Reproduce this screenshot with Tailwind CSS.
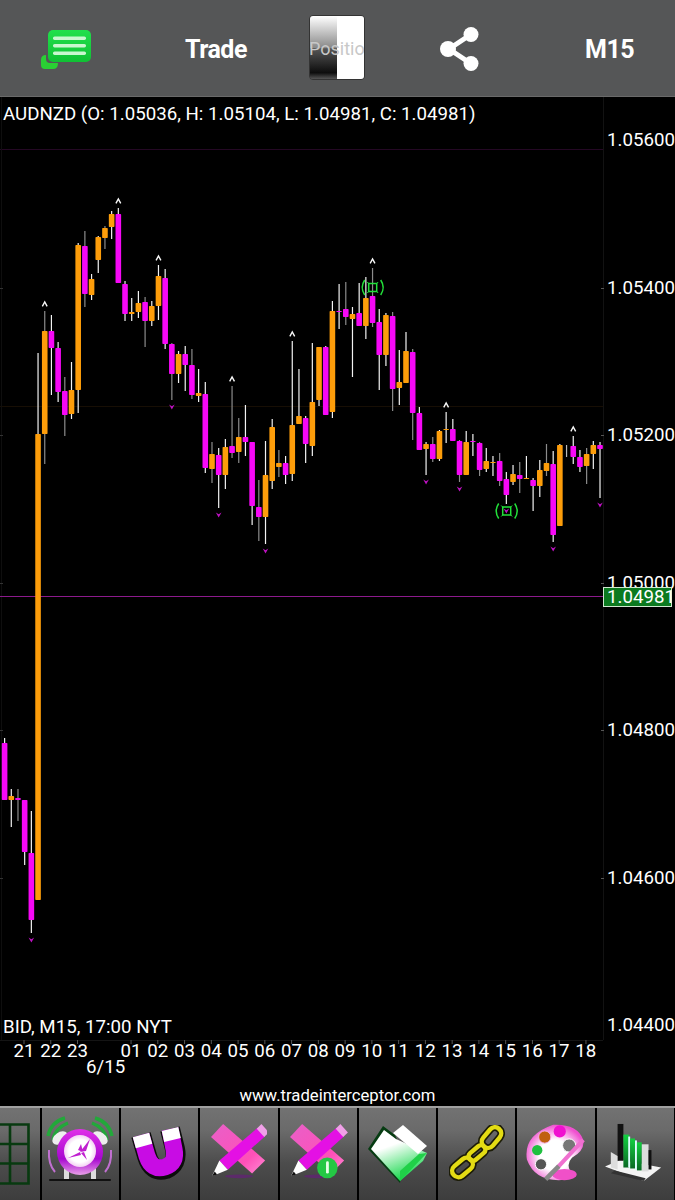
<!doctype html>
<html>
<head>
<meta charset="utf-8">
<script src="https://cdn.jsdelivr.net/npm/@tailwindcss/browser@4"></script>
</head>
<body class="bg-black">
<div class="w-[675px] h-[1200px] flex flex-col overflow-hidden bg-black text-white font-['Roboto',sans-serif]">

  <!-- Header -->
  <header class="h-[97px] shrink-0 bg-[#555657] border-b border-[#6a6a6a] flex items-center relative">
    <div class="w-[100px] flex pl-[40px]">
      <svg width="60" height="50" viewBox="0 0 60 50" class="mt-[2px] shrink-0">
        <defs><linearGradient id="chatg" x1="0" y1="0" x2="0" y2="1"><stop offset="0" stop-color="#22e04c"/><stop offset="1" stop-color="#10c034"/></linearGradient></defs>
        <path d="M6 31 q-5 0 -5 5 v5 q0 4 4 4 h8 q5 0 5 -6 h-8 q-4 0 -4 -4 z" fill="#2ad034"/>
        <rect x="8" y="6" width="43" height="32" rx="5" fill="url(#chatg)"/>
        <rect x="13" y="12.5" width="33" height="3.4" rx="1.6" fill="#c9f7cf"/>
        <rect x="13" y="20" width="33" height="3.4" rx="1.6" fill="#c9f7cf"/>
        <rect x="13" y="27.5" width="33" height="3.4" rx="1.6" fill="#c9f7cf"/>
      </svg>
    </div>
    <div class="ml-[84px] w-[64px] text-center text-[25px] font-bold tracking-[-0.5px] leading-none mt-[3px]">Trade</div>
    <div class="ml-[61px] w-[56px] h-[65px] rounded-[4px] border border-[#333] overflow-hidden relative flex -mt-[1px]">
      <div class="w-1/2 h-full bg-[linear-gradient(to_bottom,#ffffff_0%,#8a8a8a_50%,#555_52%,#0d0d0d_90%,#555_100%)]"></div>
      <div class="w-1/2 h-full bg-white"></div>
      <div class="absolute inset-0 flex items-center whitespace-nowrap text-[18px] text-[#c8c8c8] leading-none -ml-[1px] mt-[3px]">Positio</div>
    </div>
    <div class="ml-[74px] w-[42px] flex">
      <svg width="42" height="48" viewBox="0 0 42 48" class="mt-[2px]">
        <path d="M31 10 L10 24 L31 38" fill="none" stroke="#fff" stroke-width="5"/>
        <circle cx="32" cy="9.5" r="7.5" fill="#fff"/><circle cx="9" cy="24" r="8" fill="#fff"/><circle cx="32" cy="38.5" r="7.5" fill="#fff"/>
      </svg>
    </div>
    <div class="ml-[104px] text-[25px] font-bold tracking-[-0.5px] leading-none mt-[3px]">M15</div>
  </header>

  <!-- Chart -->
  <main class="relative h-[1009px] shrink-0 bg-black">
    <svg id="chart" width="675" height="1009" viewBox="0 97 675 1009" class="absolute inset-0"></svg>

    <div class="absolute left-[3px] top-[5px] text-[18.7px] leading-[24px] whitespace-nowrap">AUDNZD (O: 1.05036, H: 1.05104, L: 1.04981, C: 1.04981)</div>

    <div class="absolute left-[607px] top-[31px] text-[18.7px] leading-[24px]">1.05600</div>
    <div class="absolute left-[607px] top-[179px] text-[18.7px] leading-[24px]">1.05400</div>
    <div class="absolute left-[607px] top-[326px] text-[18.7px] leading-[24px]">1.05200</div>
    <div class="absolute left-[607px] top-[474px] text-[18.7px] leading-[24px]">1.05000</div>
    <div class="absolute left-[607px] top-[621px] text-[18.7px] leading-[24px]">1.04800</div>
    <div class="absolute left-[607px] top-[769px] text-[18.7px] leading-[24px]">1.04600</div>
    <div class="absolute left-[607px] top-[916px] text-[18.7px] leading-[24px]">1.04400</div>

    <div class="absolute left-[603px] top-[490px] w-[69px] h-[20px] bg-[#0b7a1f] border border-[#cfe8cf] text-[18.7px] leading-[19px] pl-[3px]">1.04981</div>

    <div class="absolute left-[3px] top-[918px] text-[18.7px] leading-[24px] whitespace-nowrap">BID, M15, 17:00 NYT</div>

    <div class="absolute left-[10.6px] top-[942px] flex text-[18.7px] leading-[24px]">
      <span class="w-[26.76px] text-center">21</span><span class="w-[26.76px] text-center">22</span><span class="w-[26.76px] text-center">23</span><span class="w-[26.76px] text-center"></span><span class="w-[26.76px] text-center">01</span><span class="w-[26.76px] text-center">02</span><span class="w-[26.76px] text-center">03</span><span class="w-[26.76px] text-center">04</span><span class="w-[26.76px] text-center">05</span><span class="w-[26.76px] text-center">06</span><span class="w-[26.76px] text-center">07</span><span class="w-[26.76px] text-center">08</span><span class="w-[26.76px] text-center">09</span><span class="w-[26.76px] text-center">10</span><span class="w-[26.76px] text-center">11</span><span class="w-[26.76px] text-center">12</span><span class="w-[26.76px] text-center">13</span><span class="w-[26.76px] text-center">14</span><span class="w-[26.76px] text-center">15</span><span class="w-[26.76px] text-center">16</span><span class="w-[26.76px] text-center">17</span><span class="w-[26.76px] text-center">18</span>
    </div>
    <div class="absolute left-[86px] top-[958px] text-[18.7px] leading-[24px]">6/15</div>
    <div class="absolute left-0 w-[675px] top-[988px] text-center text-[16.7px] leading-[22px]">www.tradeinterceptor.com</div>
  </main>

  <!-- Toolbar -->
  <footer class="h-[94px] shrink-0 border-t-[2px] border-[#a0a0a0] bg-[linear-gradient(to_bottom,#727272_0%,#6a6a6a_25%,#4c4c4c_60%,#3d3d3d_100%)] flex -ml-[37.6px] w-[760px]">

    <div class="w-[79.3px] shrink-0 h-full border-r-2 border-black flex items-start justify-end pr-[10px] pt-[15px]">
      <svg width="40" height="62" viewBox="0 0 40 62" fill="none" stroke="#083a10" stroke-width="2.6">
        <path d="M0 1.5H38.5V60.5H0M0 21H38.5M0 40.5H38.5M20 1.5V60.5"/>
      </svg>
    </div>

    <div class="w-[79.3px] shrink-0 h-full border-r-2 border-black flex justify-center pt-[6px]">
      <svg width="70" height="72" viewBox="0 0 70 72">
        <defs><radialGradient id="face"><stop offset="0.7" stop-color="#fff"/><stop offset="1" stop-color="#f4d0f4"/></radialGradient>
        <linearGradient id="ring" x1="0" y1="0" x2="0" y2="1"><stop offset="0" stop-color="#e030e8"/><stop offset="0.65" stop-color="#a808d0"/><stop offset="1" stop-color="#e8a0e8"/></linearGradient></defs>
        <path d="M3 22 Q6 8 20 4" stroke="#22a83a" stroke-width="3.4" fill="none"/><path d="M8 26 Q10 14 23 9" stroke="#22a83a" stroke-width="3.4" fill="none"/>
        <path d="M67 22 Q64 8 50 4" stroke="#22a83a" stroke-width="3.4" fill="none"/><path d="M62 26 Q60 14 47 9" stroke="#22a83a" stroke-width="3.4" fill="none"/>
        <ellipse cx="15" cy="24" rx="8.5" ry="5.5" transform="rotate(-35 15 24)" fill="#eee"/>
        <ellipse cx="55" cy="24" rx="8.5" ry="5.5" transform="rotate(35 55 24)" fill="#eee"/>
        <path d="M4 36 Q3 50 10 58" stroke="#c070d0" stroke-width="2" fill="none"/><path d="M66 36 Q67 50 60 58" stroke="#c070d0" stroke-width="2" fill="none"/>
        <rect x="19" y="54" width="5" height="11" fill="#ddd"/><rect x="46" y="54" width="5" height="11" fill="#ddd"/>
        <circle cx="35" cy="38" r="23" fill="url(#ring)"/>
        <circle cx="35" cy="37" r="16" fill="url(#face)"/>
        <path d="M35 38 L45 25 L41 37 Z M35 38 L23 44 L36 41 Z M33 36 L36 30 L38 38 Z M36 39 L42 46 L39 38 Z" fill="#c020d0"/>
        <rect x="4" y="65" width="62" height="2" rx="1" fill="#111"/>
      </svg>
    </div>

    <div class="w-[79.3px] shrink-0 h-full border-r-2 border-black flex justify-center pt-[15px]">
      <svg width="58" height="58" viewBox="0 0 58 58" fill="none">
        <path d="M10 12 L16 33 Q21 50 35 46 Q47 41 44 26 L39 6" stroke="#0c0c0c" stroke-width="20"/>
        <path d="M10 12 L16 33 Q21 48 34 44 Q46 40 43 26 L39 6" stroke="#c80ce4" stroke-width="17"/>
        <path d="M10 12 L13 23" stroke="#fff" stroke-width="17"/>
        <path d="M39 6 L41.5 17" stroke="#fff" stroke-width="17"/>
      </svg>
    </div>

    <div class="w-[79.3px] shrink-0 h-full border-r-2 border-black flex justify-center pt-[16px]">
      <svg width="56" height="56" viewBox="0 0 60 60">
        <defs><linearGradient id="rul" x1="0" y1="0" x2="1" y2="1"><stop offset="0" stop-color="#e860c8"/><stop offset="0.7" stop-color="#ff50b8"/><stop offset="1" stop-color="#ff8cd4"/></linearGradient></defs>
        <ellipse cx="30" cy="56" rx="15" ry="2" fill="#5c2a6a"/>
        <path d="M13 0 L0 14 L44 53 L58 39 Z" fill="url(#rul)"/>
        <path d="M50 4 L58 13 L18 49 L9 39 Z" fill="#e410e4"/>
        <path d="M49 5 L54 0 L62 9 L57 14 Z" fill="#f0a0e8"/>
        <path d="M9 39 L18 49 L1 56 Z" fill="#fff"/><path d="M4 51 L6.5 54 L1 56 Z" fill="#111"/>
      </svg>
    </div>

    <div class="w-[79.3px] shrink-0 h-full border-r-2 border-black flex justify-center pt-[16px] relative">
      <svg width="56" height="56" viewBox="0 0 60 60" class="overflow-visible">
        <ellipse cx="30" cy="56" rx="15" ry="2" fill="#5c2a6a"/>
        <path d="M13 0 L0 14 L44 53 L58 39 Z" fill="url(#rul)"/>
        <path d="M50 4 L58 13 L18 49 L9 39 Z" fill="#e410e4"/>
        <path d="M49 5 L54 0 L62 9 L57 14 Z" fill="#f0a0e8"/>
        <path d="M9 39 L18 49 L1 56 Z" fill="#fff"/><path d="M4 51 L6.5 54 L1 56 Z" fill="#111"/>
        <circle cx="40" cy="47" r="11" fill="#24c844"/>
        <rect x="38.6" y="40" width="3" height="13" rx="1.4" fill="#e8ffe8"/>
      </svg>
    </div>

    <div class="w-[79.3px] shrink-0 h-full border-r-2 border-black flex justify-center pt-[15px]">
      <svg width="62" height="62" viewBox="0 0 62 62">
        <defs><linearGradient id="fold" x1="0.1" y1="0" x2="0.5" y2="1"><stop offset="0.35" stop-color="#fff"/><stop offset="1" stop-color="#14d84a"/></linearGradient></defs>
        <path d="M33 60 L1 26 L16 3 L28 12 L36 30 Z" fill="#063c12"/>
        <path d="M33 58 L4 26 L17 7 L29 16 L60 30 L56 38 Z" fill="url(#fold)"/>
        <path d="M26 10 L36 2 L60 23 L51 31 Z" fill="#fff"/>
        <path d="M33 58 L60 30 L52 31 L33 48 Z" fill="#20d048"/>
      </svg>
    </div>

    <div class="w-[79.3px] shrink-0 h-full border-r-2 border-black flex justify-center pt-[17px]">
      <svg width="56" height="56" viewBox="0 0 58 58" fill="none">
        <g stroke="#1c1c08" stroke-width="8">
          <rect x="-12" y="-6.5" width="24" height="13" rx="6.5" transform="translate(44 13) rotate(-50)"/>
          <rect x="-10" y="-4.5" width="20" height="9" rx="4.5" transform="translate(29 29) rotate(-40)"/>
          <rect x="-12" y="-6.5" width="24" height="13" rx="6.5" transform="translate(14 44) rotate(-40)"/>
        </g>
        <g stroke="#e4dc14" stroke-width="4.6">
          <rect x="-12" y="-6.5" width="24" height="13" rx="6.5" transform="translate(44 13) rotate(-50)"/>
          <rect x="-10" y="-4.5" width="20" height="9" rx="4.5" transform="translate(29 29) rotate(-40)"/>
          <rect x="-12" y="-6.5" width="24" height="13" rx="6.5" transform="translate(14 44) rotate(-40)"/>
        </g>
      </svg>
    </div>

    <div class="w-[79.3px] shrink-0 h-full border-r-2 border-black flex justify-center pt-[14px]">
      <svg width="62" height="62" viewBox="0 0 66 62">
        <defs><radialGradient id="pal" cx="0.5" cy="0.55" r="0.55"><stop offset="0.5" stop-color="#fff"/><stop offset="1" stop-color="#f050d0"/></radialGradient></defs>
        <path d="M30 1 Q56 0 62 17 Q64 28 50 36 Q44 42 48 50 Q50 60 36 60 Q10 60 2 38 Q-2 12 30 1 Z" fill="url(#pal)"/>
        <ellipse cx="42" cy="54" rx="13" ry="6" fill="#f050c8"/>
        <circle cx="21" cy="14" r="6.5" fill="#c06010" stroke="#f8b0e8"/>
        <circle cx="37" cy="8" r="6.5" fill="#f010d0"/>
        <circle cx="13" cy="28" r="5.5" fill="#20c040"/>
        <circle cx="47" cy="23" r="7" fill="#777" stroke="#fff"/>
        <circle cx="17" cy="43" r="6" fill="#555" stroke="#fff"/>
        <path d="M62 17 L35 46" stroke="#f070d0" stroke-width="4.5"/>
        <path d="M36 45 L22 59" stroke="#888" stroke-width="5"/>
      </svg>
    </div>

    <div class="w-[79.3px] shrink-0 h-full border-r-2 border-black flex justify-center pt-[14px]">
      <svg width="60" height="62" viewBox="0 0 62 62">
        <defs><linearGradient id="bar" x1="0" y1="0" x2="0" y2="1"><stop offset="0" stop-color="#12d040"/><stop offset="1" stop-color="#0a6a24"/></linearGradient></defs>
        <path d="M0 45 L16 38 L58 46 L40 60 Z" fill="#f4f4f4"/>
        <path d="M6 52 L40 60 L42 57 L10 49 Z" fill="#333"/>
        <rect x="13" y="1" width="6" height="38" fill="#111"/>
        <rect x="19" y="12" width="6" height="34" fill="url(#bar)"/>
        <rect x="24" y="14" width="2" height="32" fill="#dff"/>
        <rect x="26" y="16" width="5" height="31" fill="url(#bar)"/>
        <rect x="31" y="18" width="2" height="30" fill="#dff"/>
        <rect x="33" y="20" width="5" height="29" fill="url(#bar)"/>
        <rect x="38" y="22" width="7" height="28" fill="#ddd"/>
        <rect x="45" y="28" width="3" height="20" fill="#111"/>
        <path d="M6 30 L13 34 L13 48 L6 46 Z" fill="#ddd"/>
      </svg>
    </div>
  </footer>
</div>

<script>
var d=[
[738,743,800,800,'m'],[789,796,800,827,'o'],[789,798,800,821,'m','g'],[800,800,852,865,'m'],[811,853,920,933,'m'],
[353,434,900,900,'o'],[311,331,434,464,'o','g'],[315,331,348,395,'m'],[342,348,392,402,'m'],[377,391,415,436,'m','g'],
[362,390,414,419,'o'],[243,245,390,413,'o'],[231,246,294,307,'m','g'],[274,279,295,300,'o'],[236,237,260,273,'o'],
[226,228,238,249,'o','g'],[211,214,227,239,'o'],[208,214,283,283,'m'],[281,284,314,321,'m'],[298,312,314,321,'o'],
[291,303,312,318,'o'],[297,302,321,347,'m','g'],[301,306,321,326,'o'],[265,276,306,320,'o'],[269,278,344,349,'m'],
[343,344,374,400,'m','g'],[351,354,374,383,'o'],[346,354,365,391,'m'],[349,365,395,399,'m','g'],[369,393,396,402,'o'],
[382,394,468,473,'m'],[442,454,469,483,'o','g'],[448,455,475,508,'m'],[439,447,475,489,'o'],[386,446,453,458,'m','g'],
[418,437,452,463,'o','g'],[405,437,442,456,'m'],[442,442,506,525,'m'],[480,507,517,541,'m','g'],[441,475,517,544,'o'],
[419,427,481,489,'o'],[450,463,467,477,'o','g'],[456,463,475,484,'m'],[341,425,474,481,'o'],[369,416,424,424,'o'],
[416,418,444,463,'m'],[343,402,446,456,'o'],[347,347,400,406,'o'],[346,347,415,415,'m'],[301,311,412,418,'o'],
[284,311,312,329,'m'],[282,309,317,325,'m','g'],[307,314,319,377,'o'],[283,313,326,326,'m'],[277,298,326,339,'o'],
[268,296,323,327,'m','g'],[309,322,355,390,'m'],[313,315,355,366,'o'],[312,316,389,411,'m','g'],[350,382,388,405,'o'],
[332,351,383,383,'o'],[349,352,413,440,'m','g'],[407,413,450,450,'m'],[442,444,449,475,'o'],[437,444,459,462,'m','g'],
[430,431,459,461,'o'],[412,429,430,443,'o'],[419,429,441,441,'m'],[440,441,475,482,'m','g'],[431,442,475,475,'o'],
[434,441,442,456,'m'],[442,443,470,476,'m','g'],[448,461,469,472,'o'],[456,462,463,476,'o'],[453,461,481,486,'m','g'],
[472,479,495,504,'m'],[465,474,482,485,'o'],[462,475,479,493,'m','g'],[456,478,479,479,'o'],[478,480,486,511,'m'],
[460,470,486,497,'o'],[444,463,471,476,'o','g'],[451,464,535,542,'m'],[444,445,526,526,'o'],[445,450,451,457,'g'],
[436,446,457,464,'m'],[450,457,467,472,'m'],[448,454,466,484,'o','g'],[441,445,454,469,'o'],[442,445,449,498,'m']
];
var up=[6,17,23,34,43,55,66,85], down=[4,25,32,39,63,68,75,82,89];
var o='';
function line(x1,y1,x2,y2,c,w){o+='<line x1="'+x1+'" y1="'+y1+'" x2="'+x2+'" y2="'+y2+'" stroke="'+c+'" stroke-width="'+(w||1)+'"/>';}
line(0,149.5,603,149.5,'#240824');
line(0,406.5,603,406.5,'#170e04');
line(603.5,97,603.5,1040,'#121212');
line(1.5,97,1.5,1040,'#0e0e0e');
line(0,1040.5,603,1040.5,'#141414');
[288,435,583,730,878].forEach(function(y){line(0,y+.5,3,y+.5,'#333');line(601,y+.5,604,y+.5,'#555');});
for(var k=0;k<22;k++){if(k==3)continue;var tx=24+26.76*k;line(tx,1040,tx,1044,'#555');}
line(0,596.5,603,596.5,'#8c1a8c');
function cxOf(i){return 4.6+6.69*i;}
d.forEach(function(c,i){
  var cx=cxOf(i);
  var col=c[4]=='o'?'#fd9d0a':(c[4]=='m'?'#f608f6':'#ccc');
  var wick=c[5]=='g'?'#8c8c8c':'#f2f2f2';
  if(c[4]=='g')wick='#bbb';
  line(cx,c[0],cx,c[3],wick,1.2);
  if(c[4]=='g')return;
  o+='<rect x="'+(cx-2.8)+'" y="'+c[1]+'" width="5.6" height="'+Math.max(1,c[2]-c[1])+'" rx="0.7" fill="'+col+'"/>';
});
up.forEach(function(i){var cx=cxOf(i),y=d[i][0]-7;
  o+='<path d="M'+(cx-2.4)+' '+(y+2.4)+' L'+cx+' '+(y-2)+' L'+(cx+2.4)+' '+(y+2.4)+'" fill="none" stroke="#f8f8f8" stroke-width="1.4"/>';});
down.forEach(function(i){var cx=cxOf(i),y=d[i][3]+7;
  o+='<path d="M'+(cx-2.8)+' '+(y-2.4)+' L'+cx+' '+(y-0.8)+' L'+(cx+2.8)+' '+(y-2.4)+' L'+cx+' '+(y+2.6)+' Z" fill="#c012c4"/>';});
function mark(cx,cy){
  var g='#22e03a';
  o+='<path d="M'+(cx-8)+' '+(cy-7.5)+' Q'+(cx-13)+' '+cy+' '+(cx-8)+' '+(cy+7.5)+'" fill="none" stroke="'+g+'" stroke-width="1.5"/>';
  o+='<path d="M'+(cx+8)+' '+(cy-7.5)+' Q'+(cx+13)+' '+cy+' '+(cx+8)+' '+(cy+7.5)+'" fill="none" stroke="'+g+'" stroke-width="1.5"/>';
  o+='<rect x="'+(cx-4)+'" y="'+(cy-4)+'" width="8" height="8" fill="none" stroke="'+g+'" stroke-width="1.5"/>';
  o+='<path d="M'+(cx-5.5)+' '+(cy-5.5)+'l2 2M'+(cx+5.5)+' '+(cy-5.5)+'l-2 2M'+(cx-5.5)+' '+(cy+5.5)+'l2 -2M'+(cx+5.5)+' '+(cy+5.5)+'l-2 -2" stroke="'+g+'" stroke-width="1"/>';
}
mark(372.7,287.5);mark(506.7,511);
document.getElementById('chart').innerHTML=o;
</script>
</body>
</html>
